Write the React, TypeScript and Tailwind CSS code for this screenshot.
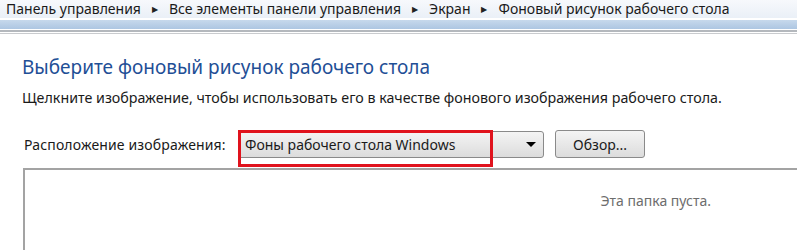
import React from 'react';

const Crumb: React.FC<{ label: string; last?: boolean }> = ({ label, last }) => (
  <>
    <span className="whitespace-nowrap">{label}</span>
    {!last && <span className="ml-[11px] mr-[11px] text-[8px] text-[#222]">▶</span>}
  </>
);

const App: React.FC = () => {
  return (
    <div className="w-[797px] h-[250px] overflow-hidden bg-white font-['Noto_Sans',sans-serif] text-[#1a1a1a]">
      {/* Breadcrumb */}
      <div className="h-[18px] bg-gradient-to-b from-[#f7f9fc] to-[#eaf0f7] flex items-center pl-[6px] text-[14px] leading-none">
        <Crumb label="Панель управления" />
        <Crumb label="Все элементы панели управления" />
        <Crumb label="Экран" />
        <Crumb label="Фоновый рисунок рабочего стола" last />
      </div>
      <div className="h-[2px] bg-white" />
      <div className="h-[9px] bg-gradient-to-b from-[#c7d9ec] to-[#adc6e2]" />
      <div className="h-[1px] bg-white" />
      <div className="h-[2px] bg-[#b4b8bd]" />
      <div className="h-[1px] bg-white" />
      <div className="h-[1px] bg-[#c9cbce]" />

      {/* Content */}
      <div className="pl-[22px] pt-[21px]">
        <h1 className="text-[19px] leading-[25px] text-[#1f4f96]">
          Выберите фоновый рисунок рабочего стола
        </h1>
        <p className="mt-[9px] text-[14.25px] leading-[18px]">
          Щелкните изображение, чтобы использовать его в качестве фонового изображения рабочего стола.
        </p>

        <div className="mt-[23px] flex items-center h-[28px]">
          <span className="text-[14px] w-[216px] pl-[2px] tracking-[0.15px]">Расположение изображения:</span>
          <div className="relative">
            <div className="w-[306px] h-[27px] rounded-[3px] border border-[#8a8a8a] bg-gradient-to-b from-[#f4f4f4] to-[#dcdcdc] flex items-center pl-[6px] text-[14px]">
              <span className="flex-1">Фоны рабочего стола Windows</span>
              <span className="w-0 h-0 mr-[7px] border-l-[5px] border-r-[5px] border-t-[5px] border-l-transparent border-r-transparent border-t-black" />
            </div>
            <div className="absolute left-[0px] top-[-1px] w-[255px] h-[37px] border-[3px] border-[#e0131d]" />
          </div>
          <button className="ml-[11px] w-[90px] h-[28px] rounded-[3px] border border-[#8a8a8a] bg-gradient-to-b from-[#f4f4f4] to-[#dcdcdc] text-[14px]">
            Обзор...
          </button>
        </div>

        <div className="mt-[10px] ml-[1px] h-[100px] border-l-2 border-t-2 border-[#a3a3a3] flex justify-end pr-[86px] pt-[20px]">
          <span className="text-[14px] text-[#6d6d6d]">Эта папка пуста.</span>
        </div>
      </div>
    </div>
  );
};

export default App;
